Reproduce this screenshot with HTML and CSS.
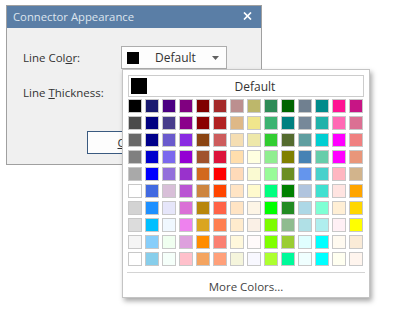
FILE: index.html
```html
<!DOCTYPE html>
<html>
<head>
<meta charset="utf-8">
<link rel="stylesheet" href="styles.css">
</head>
<body>
<div class="stage">
<div class="dialog">
  <div class="titlebar">
    <span class="title">Connector Appearance</span>
    <svg class="close" width="9" height="8" viewBox="0 0 9 8"><path d="M1 0.5 L8 7.5 M8 0.5 L1 7.5" stroke="#fff" stroke-width="1.7" fill="none"/></svg>
  </div>
  <div class="body">
    <div class="row">
      <span class="label">Line Col<u>o</u>r:</span>
      <div class="combo">
        <span class="combo-swatch"></span>
        <span class="combo-text">Default</span>
        <svg class="combo-arrow" width="7" height="4" viewBox="0 0 7 4"><path d="M0 0 H7 L3.5 4 Z" fill="#606060"/></svg>
      </div>
    </div>
    <div class="row">
      <span class="label">Line <u>T</u>hickness:</span>
    </div>
    <div class="buttons">
      <button class="btn"><u>C</u>lose</button>
    </div>
  </div>
</div>
<div class="popup">
  <div class="default-row">
    <span class="default-swatch"></span>
    <span class="default-text">Default</span>
  </div>
  <div class="grid" id="grid"></div>
  <div class="sep"></div>
  <div class="more">More Colors...</div>
</div>
</div>
<script>
var colors = [
"#000000","#191970","#4b0082","#800080","#800000","#a52a2a","#bc8f8f","#bdb76b","#2e8b57","#006400","#708090","#008b8b","#ff1493","#c71585",
"#4b4b4b","#000080","#483d8b","#8b008b","#8b0000","#b22222","#deb887","#f0e68c","#3cb371","#008080","#778899","#20b2aa","#ff69b4","#db7093",
"#696969","#00008b","#6a5acd","#8a2be2","#8b4513","#cd5c5c","#f5deb3","#eee8aa","#32cd32","#556b2f","#5f9ea0","#00ced1","#ff00ff","#f08080",
"#808080","#0000cd","#7b68ee","#9400d3","#a0522d","#dc143c","#ffdead","#ffffe0","#90ee90","#808000","#4682b4","#66cdaa","#ff00ff","#e9967a",
"#a9a9a9","#0000ff","#9370db","#9932cc","#d2691e","#ff0000","#ffdab9","#fafad2","#98fb98","#6b8e23","#6495ed","#48d1cc","#ffb6c1","#d2b48c",
"#ffffff","#4169e1","#d8bfd8","#ba55d3","#cd853f","#ff4500","#ffe4c4","#fffacd","#00ff7f","#008000","#b0c4de","#40e0d0","#ffe4e1","#ffa500",
"#d3d3d3","#1e90ff","#e6e6fa","#da70d6","#b8860b","#ff6347","#ffe4c4","#fdf5e6","#00ff00","#228b22","#add8e6","#7fffd4","#ffefd5","#ffd700",
"#dcdcdc","#00bfff","#f0f8ff","#ee82ee","#daa520","#ff7f50","#ffebcd","#faf0e6","#7cfc00","#8fbc8f","#b0e0e6","#afeeee","#fff0f5","#ffff00",
"#f5f5f5","#87cefa","#f0fff0","#dda0dd","#ff8c00","#fa8072","#fff8dc","#fffafa","#7fff00","#9acd32","#e0ffff","#00ffff","#fffaf0","#faebd7",
"#ffffff","#87ceeb","#f5fffa","#ffc0cb","#f4a460","#ffa07a","#f5f5dc","#f8f8ff","#adff2f","#00fa9a","#f0ffff","#00ffff","#fffff0","#fff5ee"
];
var g = document.getElementById("grid");
colors.forEach(function(c){
  var d = document.createElement("span");
  d.className = "cell";
  d.style.background = c;
  g.appendChild(d);
});
</script>
</body>
</html>
```

FILE: styles.css
```css
html, body {
  margin: 0;
  padding: 0;
  background: #ffffff;
}
body {
  font-family: "Open Sans", "Noto Sans", sans-serif;
  font-size: 11.5px;
  color: #2b2b2b;
}
.stage {
  position: relative;
  height: 330px;
  overflow: hidden;
}
.dialog {
  margin: 5px 0 0 6px;
  width: 254px;
  border: 1px solid #a0a0a0;
  background: #f0f0f0;
}
.titlebar {
  height: 22px;
  background: #5a7ea6;
  display: flex;
  align-items: center;
  justify-content: space-between;
  padding: 0 9px 0 6px;
}
.title {
  color: #dde5ee;
  font-size: 11.3px;
  line-height: 22px;
}
.close {
  display: block;
  margin-top: -3px;
}
.body {
  padding: 18px 0 10px 16px;
}
.row {
  display: flex;
  align-items: center;
  height: 23px;
}
.row + .row {
  margin-top: 12px;
}
.label {
  width: 98px;
  color: #333;
}
.combo {
  width: 99px;
  height: 21px;
  border: 1px solid #adadad;
  background: #fdfdfd;
  display: flex;
  align-items: center;
  padding-left: 5px;
  box-sizing: content-box;
}
.combo-swatch {
  width: 12px;
  height: 12px;
  background: #000;
}
.combo-text {
  flex: 1;
  text-align: center;
  color: #333;
  font-size: 12px;
}
.combo-arrow {
  margin-right: 7px;
}
.buttons {
  margin-top: 27px;
  padding-left: 64px;
}
.btn {
  width: 90px;
  height: 23px;
  border: 1px solid #3a5a80;
  background: #fdfdfd;
  font-family: "Open Sans", "Noto Sans", sans-serif;
  font-size: 11.5px;
  color: #333;
  padding: 0;
}
.popup {
  position: absolute;
  left: 122px;
  top: 69px;
  width: 236px;
  border: 1px solid #c4c4c4;
  background: #ffffff;
  padding: 5px 5px 0 5px;
  box-shadow: 2px 3px 5px rgba(0, 0, 0, 0.35);
}
.default-row {
  height: 20px;
  border: 1px solid #cccccc;
  display: flex;
  align-items: center;
  padding-left: 2px;
}
.default-swatch {
  width: 16px;
  height: 16px;
  background: #000;
}
.default-text {
  flex: 1;
  text-align: center;
  color: #333;
  font-size: 12px;
}
.grid {
  margin-top: 2px;
  display: grid;
  grid-template-columns: repeat(14, 14px);
  grid-auto-rows: 14px;
  gap: 3px;
}
.cell {
  display: block;
  border: 1px solid #c8c8c8;
  box-sizing: border-box;
}
.sep {
  margin: 6px -1px 0 -1px;
  height: 1px;
  background: #d4d4d4;
}
.more {
  height: 24px;
  padding-top: 5px;
  box-sizing: border-box;
  line-height: 18px;
  text-align: center;
  color: #444;
  font-size: 11.5px;
}
```
